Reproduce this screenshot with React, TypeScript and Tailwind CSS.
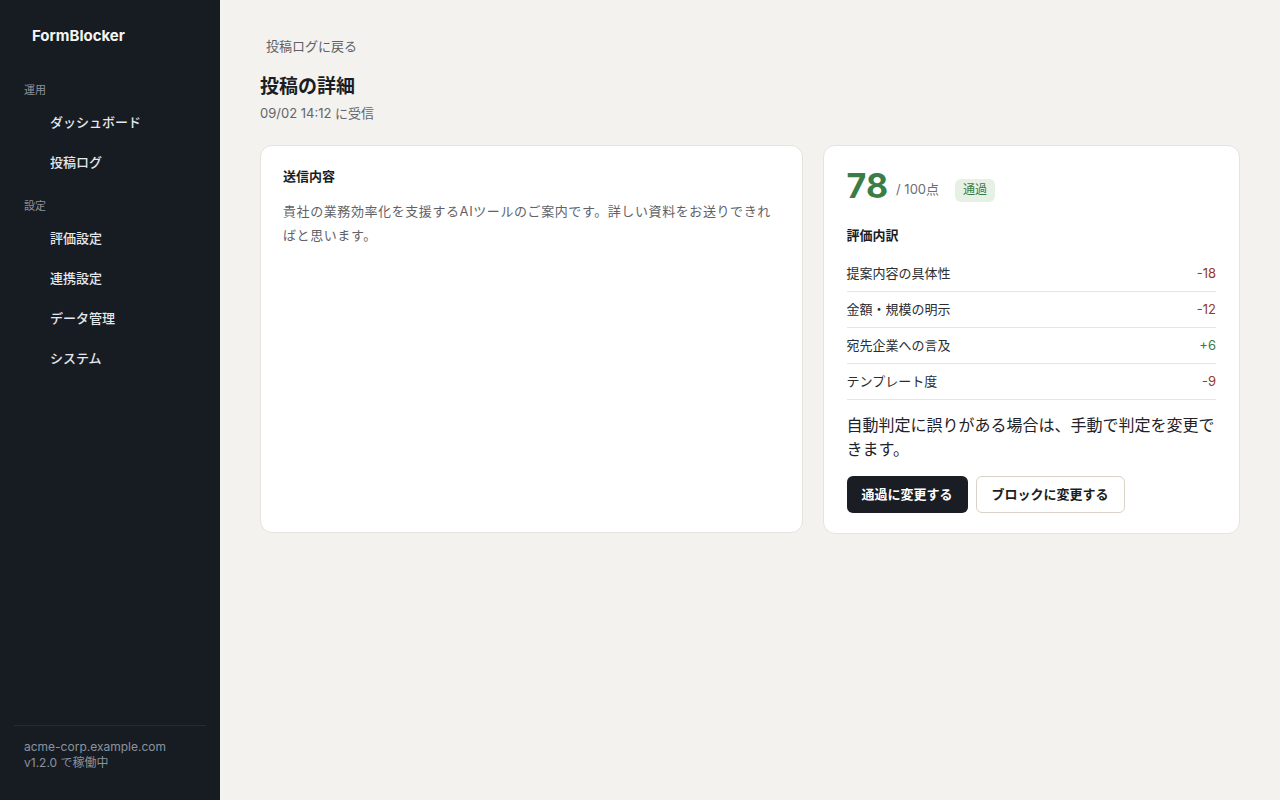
import React from "react";

const font = { fontFamily: 'Inter, "Noto Sans CJK JP", sans-serif' };

function NavItem({ label }: { label: string }) {
  return (
    <div className="h-10 flex items-center pl-[34px] text-[13px] font-medium text-[#e5e7eb] cursor-pointer">
      {label}
    </div>
  );
}

function Row({ label, value, positive }: { label: string; value: string; positive?: boolean }) {
  return (
    <div className="h-9 flex items-center justify-between border-b border-[#e8e5df] text-[13px]">
      <span className="text-[#2b2d31]">{label}</span>
      <span className={positive ? "text-[#3b7a45]" : "text-[#923a2d]"}>{value}</span>
    </div>
  );
}

export default function App() {
  return (
    <div className="flex w-full h-[800px] bg-[#f3f2ee]" style={font}>
      <aside className="w-[220px] shrink-0 bg-[#171c23] flex flex-col px-4">
        <div className="pt-[25px] px-4 text-[15px] leading-[22px] font-bold text-[#f5f5f4]">FormBlocker</div>
        <div className="mt-[35px]">
          <div className="px-2 text-[11px] leading-4 text-[#8d939c] mb-[5px]">運用</div>
          <NavItem label="ダッシュボード" />
          <NavItem label="投稿ログ" />
        </div>
        <div className="mt-[15px]">
          <div className="px-2 text-[11px] leading-4 text-[#8d939c] mb-[5px]">設定</div>
          <NavItem label="評価設定" />
          <NavItem label="連携設定" />
          <NavItem label="データ管理" />
          <NavItem label="システム" />
        </div>
        <div className="mt-auto -mx-[2px] border-t border-[#262c35] pt-[13px] pb-[29px] px-[10px] text-[12px] leading-4 text-[#8a939f]">
          <div>acme-corp.example.com</div>
          <div>v1.2.0 で稼働中</div>
        </div>
      </aside>

      <main className="flex-1 px-10 pt-8">
        <div className="px-1.5 py-1 text-[13px] leading-5 text-[#5f6166] w-fit">投稿ログに戻る</div>
        <h1 className="mt-[13px] text-[19px] leading-7 font-bold text-[#1a1d23]">投稿の詳細</h1>
        <div className="mt-0.5 text-[13px] leading-5 text-[#62656b]">09/02 14:12 に受信</div>

        <div className="mt-[22px] grid grid-cols-[1.3fr_1fr] gap-5">
          <section className="bg-white border border-[#e6e3dc] rounded-xl px-[22px] pt-5 h-[388px]">
            <div className="text-[13px] leading-5 font-bold text-[#1a1d23]">送信内容</div>
            <p className="mt-[13px] text-[13px] leading-6 tracking-[0.045em] text-[#5f6369]">
              貴社の業務効率化を支援するAIツールのご案内です。詳しい資料をお送りできればと思います。
            </p>
          </section>

          <section className="bg-white border border-[#e6e3dc] rounded-xl px-[23px] pt-5 pb-5">
            <div className="flex items-center h-10">
              <span className="text-[34px] leading-10 font-bold text-[#3b7d46]">78</span>
              <span className="ml-2 mt-2 text-[13px] text-[#6b6e74]">/ 100点</span>
              <span className="ml-4 mt-2 px-2 h-[23px] flex items-center rounded-md bg-[#e6f0e4] text-[12px] text-[#3b7a45]">通過</span>
            </div>
            <div className="mt-[19px] text-[13px] leading-5 font-bold text-[#1a1d23] mb-[11px]">評価内訳</div>
            <Row label="提案内容の具体性" value="-18" />
            <Row label="金額・規模の明示" value="-12" />
            <Row label="宛先企業への言及" value="+6" positive />
            <Row label="テンプレート度" value="-9" />
            <p className="mt-[13px] text-[16px] leading-6 text-[#1f2228]">
              自動判定に誤りがある場合は、手動で判定を変更できます。
            </p>
            <div className="mt-[15px] flex gap-2">
              <button className="h-[37px] px-[15px] rounded-md bg-[#1a1d23] text-white text-[13px] font-bold">通過に変更する</button>
              <button className="h-[37px] px-[15px] rounded-md border border-[#d8d3c6] bg-white text-[#1a1d23] text-[13px] font-bold">ブロックに変更する</button>
            </div>
          </section>
        </div>
      </main>
    </div>
  );
}
